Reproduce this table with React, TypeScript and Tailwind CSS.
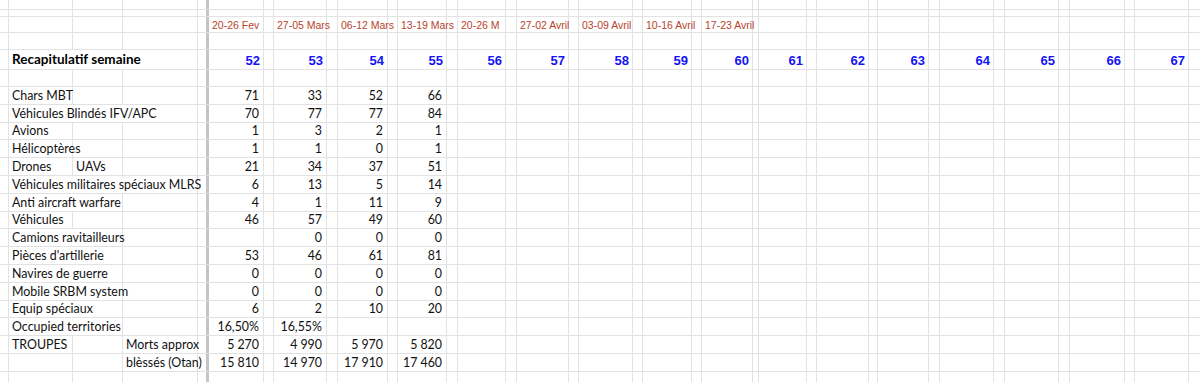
import React from "react";

const COLS: [string, string][] = [
  ["w-[55px]", "w-[10px]"],
  ["w-[53px]", "w-[11px]"],
  ["w-[50px]", "w-[10px]"],
  ["w-[49px]", "w-[11px]"],
  ["w-[48px]", "w-[11px]"],
  ["w-[52px]", "w-[10px]"],
  ["w-[54px]", "w-[10px]"],
  ["w-[49px]", "w-[10px]"],
  ["w-[51px]", "w-[6px]"],
  ["w-[48px]", "w-[10px]"],
  ["w-[52px]", "w-[9px]"],
  ["w-[51px]", "w-[11px]"],
  ["w-[54px]", "w-[11px]"],
  ["w-[54px]", "w-[11px]"],
  ["w-[55px]", "w-[10px]"],
  ["w-[54px]", "w-[12px]"],
];

const DATES = [
  "20-26 Fev",
  "27-05 Mars",
  "06-12 Mars",
  "13-19 Mars",
  "20-26 M",
  "27-02 Avril",
  "03-09 Avril",
  "10-16 Avril",
  "17-23 Avril",
];

type Line = {
  h: string;
  a?: string;
  b?: string;
  c?: string;
  span?: 1 | 2 | 3;
  vals?: string[];
  kind?: "dates" | "weeks";
};

const NB = "\u202F";

const LINES: Line[] = [
  { h: "h-[10px]" },
  { h: "h-[7px]" },
  { h: "h-[16px]", kind: "dates" },
  { h: "h-[17px]" },
  { h: "h-[20px]", kind: "weeks", a: "Recapitulatif semaine", span: 3 },
  { h: "h-[17px]" },
  { h: "h-[18px]", a: "Chars MBT", vals: ["71", "33", "52", "66"] },
  { h: "h-[18px]", a: "Véhicules Blindés IFV/APC", span: 3, vals: ["70", "77", "77", "84"] },
  { h: "h-[17px]", a: "Avions", vals: ["1", "3", "2", "1"] },
  { h: "h-[18px]", a: "Hélicoptères", vals: ["1", "1", "0", "1"] },
  { h: "h-[18px]", a: "Drones", b: "UAVs", vals: ["21", "34", "37", "51"] },
  { h: "h-[18px]", a: "Véhicules militaires spéciaux MLRS", span: 3, vals: ["6", "13", "5", "14"] },
  { h: "h-[18px]", a: "Anti aircraft warfare", span: 2, vals: ["4", "1", "11", "9"] },
  { h: "h-[17px]", a: "Véhicules", vals: ["46", "57", "49", "60"] },
  { h: "h-[18px]", a: "Camions ravitailleurs", span: 2, vals: ["", "0", "0", "0"] },
  { h: "h-[18px]", a: "Pièces d'artillerie", span: 2, vals: ["53", "46", "61", "81"] },
  { h: "h-[18px]", a: "Navires de guerre", span: 2, vals: ["0", "0", "0", "0"] },
  { h: "h-[18px]", a: "Mobile SRBM system", span: 2, vals: ["0", "0", "0", "0"] },
  { h: "h-[17px]", a: "Equip spéciaux", span: 2, vals: ["6", "2", "10", "20"] },
  { h: "h-[18px]", a: "Occupied territories", span: 2, vals: ["16,50%", "16,55%", "", ""] },
  { h: "h-[18px]", a: "TROUPES", c: "Morts approx", vals: [`5${NB}270`, `4${NB}990`, `5${NB}970`, `5${NB}820`] },
  { h: "h-[18px]", c: "blèssés (Otan)", vals: [`15${NB}810`, `14${NB}970`, `17${NB}910`, `17${NB}460`] },
  { h: "h-[18px]" },
];

const line = "border-[#e2e2e2]";
const body = "font-['Lato','Open_Sans',sans-serif] text-[12.4px] leading-none text-[#111]";

function Label({ w, text, title }: { w: string; text?: string; title?: boolean }) {
  return (
    <div className={`${w} h-full shrink-0 border-r ${line} flex items-center pl-[3px] pt-[1px] whitespace-nowrap overflow-visible`}>
      {text && (
        <span className={title ? "font-['Lato','Open_Sans',sans-serif] text-[13.5px] leading-none font-bold text-black" : body}>
          {text}
        </span>
      )}
    </div>
  );
}

function Row({ l }: { l: Line }) {
  const span = l.span ?? 1;
  return (
    <div className={`flex ${l.h} shrink-0 border-b ${line}`}>
      <div className={`w-[9px] h-full shrink-0 border-r ${line}`} />
      {span === 3 && <Label w="w-[189px]" text={l.a} title={l.kind === "weeks"} />}
      {span === 2 && (
        <>
          <Label w="w-[114px]" text={l.a} />
          <Label w="w-[75px]" text={l.c} />
        </>
      )}
      {span === 1 && (
        <>
          <Label w="w-[64px]" text={l.a} />
          <Label w="w-[50px]" text={l.b} />
          <Label w="w-[75px]" text={l.c} />
        </>
      )}
      <div className="w-[8px] h-full shrink-0" />
      <div className="w-[3px] h-full shrink-0 bg-[#c4c4c4]" />
      {COLS.map(([main, gap], i) => (
        <React.Fragment key={i}>
          <div className={`${main} h-full shrink-0 border-r ${line} flex items-center pt-[1px] whitespace-nowrap`}>
            {l.kind === "dates" && DATES[i] && (
              <span className="pl-[3px] font-['Liberation_Sans',Arial,sans-serif] text-[10.5px] leading-none text-[#b8432d]">
                {DATES[i]}
              </span>
            )}
            {l.kind === "weeks" && (
              <span className="ml-auto pr-[3px] font-['Liberation_Sans',Arial,sans-serif] text-[13px] leading-none font-bold text-[#1414f5]">
                {52 + i}
              </span>
            )}
            {l.vals && l.vals[i] && (
              <span className={`ml-auto pr-[4px] ${body}`}>{l.vals[i]}</span>
            )}
          </div>
          <div className={`${gap} h-full shrink-0 border-r ${line}`} />
        </React.Fragment>
      ))}
    </div>
  );
}

export default function App() {
  return (
    <div className="w-[1200px] h-[382px] overflow-hidden bg-white flex flex-col">
      {LINES.map((l, i) => (
        <Row key={i} l={l} />
      ))}
    </div>
  );
}
